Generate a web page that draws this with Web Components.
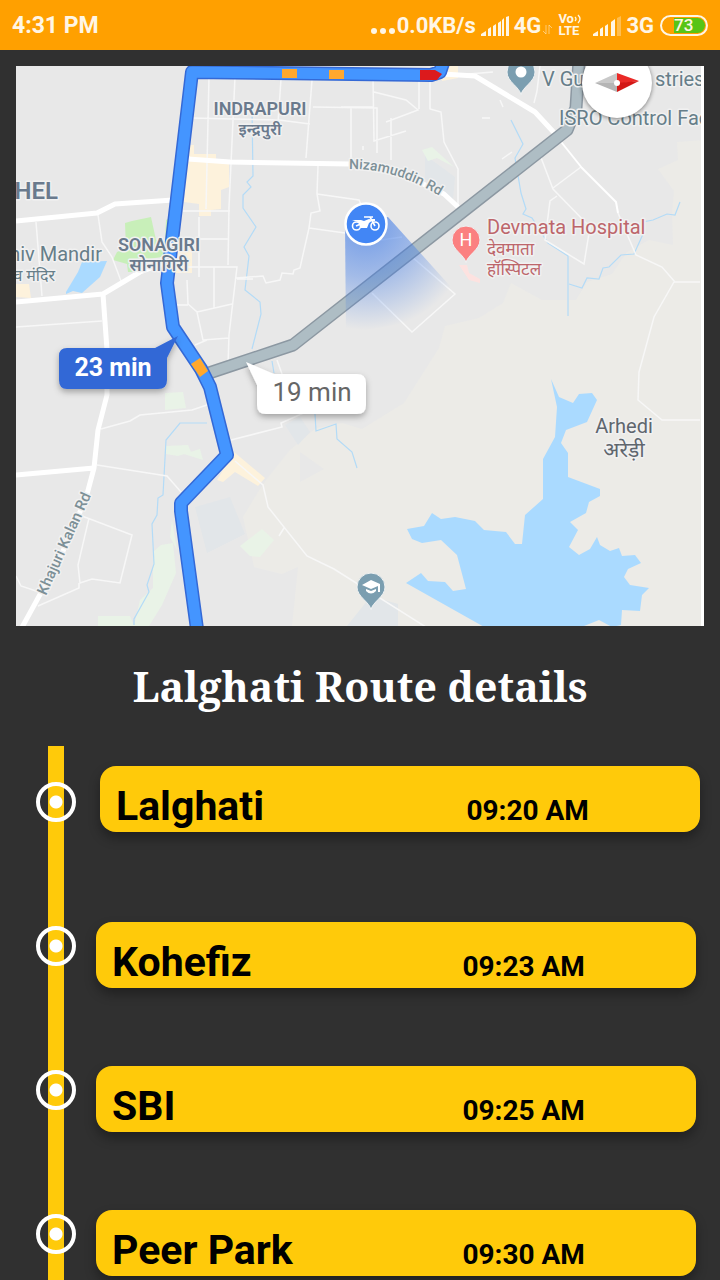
<!DOCTYPE html>
<html lang="en">
<head>
<meta charset="utf-8">
<meta name="viewport" content="width=device-width, initial-scale=1">
<title>Lalghati Route details</title>
<style>
html,body{margin:0;height:100%;background:#303030}
body{font-family:Roboto,"Noto Sans",sans-serif}
</style>
</head>
<body>
<route-app>
  <status-bar slot="status"></status-bar>
  <route-map></route-map>
  <route-heading>Lalghati Route details</route-heading>
  <route-timeline>
    <route-stop current time="09:20 AM">Lalghati</route-stop>
    <route-stop time="09:23 AM">Kohefiz</route-stop>
    <route-stop time="09:25 AM">SBI</route-stop>
    <route-stop time="09:30 AM">Peer Park</route-stop>
  </route-timeline>
</route-app>

<template id="t-app">
<style>
:host{display:flex;flex-direction:column;height:100vh}
main{flex:1;min-height:0;overflow-y:auto;scrollbar-width:none}
</style>
<slot name="status"></slot>
<main><slot></slot></main>
</template>

<template id="t-status">
<style>
:host{display:flex;align-items:center;justify-content:space-between;box-sizing:border-box;height:50px;padding:2px 12px 0;background:#ffa000;color:#fff6e5;font-size:23px;line-height:28px;font-weight:700}
.right{display:flex;align-items:center;font-size:22px}
.dots{width:27px;height:8px;margin-top:10px}
.bars{width:28px;height:20px;margin:0 5px}
.data{width:9px;height:12px;margin:8px 6px 0 2px}
.volte{display:grid;width:24px;font-size:13px;line-height:12px;margin:0 6px 2px 0}
.vo{display:flex;align-items:center}
.vo svg{width:7px;height:10px}
.battery{box-sizing:border-box;width:48px;height:21px;border:2px solid #fff6e5;border-radius:11px;margin:0 0 2px 6px;padding:1px;display:flex}
.battery span{flex:1;border-radius:0 8px 8px 0;margin-left:11px;background:#58c416;font-size:17px;line-height:15px;font-weight:500}
</style>
<span>4:31 PM</span>
<div class="right">
  <svg class="dots" viewBox="0 0 27 8" fill="#fff6e5"><circle cx="4" cy="4" r="3"/><circle cx="13" cy="4" r="3"/><circle cx="22" cy="4" r="3"/></svg>
  <span>0.0KB/s</span>
  <svg class="bars" viewBox="0 0 28 20" fill="#fff6e5"><path d="M0 20v-2l5-3v5zM7 13l3-2v9H7zM12 10l3-2v12h-3zM17 7l3-2v15h-3zM21 4l2-2v18h-2zM25 1l3-1v20h-3z"/></svg>
  <span>4G</span>
  <svg class="data" viewBox="0 0 9 12" stroke="#fff6e5" stroke-opacity=".5" fill="none"><path d="M3 1v9L0 7M6 10V1l3 3"/></svg>
  <span class="volte"><span class="vo">Vo<svg viewBox="0 0 7 10" fill="none" stroke="#fff6e5" stroke-width="1.3"><path d="M1 3q2 2 0 4M4 1q4 4 0 8"/></svg></span><span>LTE</span></span>
  <svg class="bars" viewBox="0 0 28 20" fill="#fff6e5"><path d="M0 20v-2l5-3v5zM7 13l3-2v9H7zM12 10l3-2v12h-3zM18 6l4-3v17h-4z"/><path opacity=".35" d="M24 2l4-2v20h-4z"/></svg>
  <span>3G</span>
  <div class="battery"><span>73</span></div>
</div>
</template>

<template id="t-map">
<style>
:host{display:block;position:relative;margin:16px 16px 0;overflow:hidden}
.map{display:block;width:100%;height:auto;font-family:Roboto,"Noto Sans",sans-serif}
button{position:absolute;top:-18px;right:52px;width:70px;height:70px;padding:0;border:0;border-radius:50%;background:#fff;box-shadow:0 1px 4px #0007}
button svg{display:block;width:70px;height:70px}
.halo text{paint-order:stroke;stroke:#f1f1f1;stroke-width:3px;stroke-linejoin:round}
</style>
<svg class="map" viewBox="16 66 688 560" role="img" aria-label="Route map">
  <defs>
    <radialGradient id="beam" gradientUnits="userSpaceOnUse" cx="366" cy="224" r="106"><stop offset="0" stop-color="#3b78e7" stop-opacity=".7"/><stop offset=".5" stop-color="#3b78e7" stop-opacity=".4"/><stop offset="1" stop-color="#3b78e7" stop-opacity="0"/></radialGradient>
    <filter id="shade" x="-20%" y="-20%" width="140%" height="170%"><feDropShadow dx="0" dy="3" stdDeviation="3" flood-opacity=".3"/></filter>
    <path id="niz" d="M349 169Q400 168 450 203"/>
    <path id="kha" d="M46 596L98 480"/>
    <path id="pin" d="M0 22C-1 14-14 9-14-1A14 14 0 0 1 14-1C14 9 1 14 0 22z"/>
  </defs>
  <path fill="#e8e8e8" d="M16 66h688v560H16z"/>
  <path fill="#ecebe7" d="M704 140l-27 2 1 18-20 9 16 22-2 22 1 32-24-5-22 12-15 22-25 8-11 18-34 0-31-17-8 20-24 15-34 8-6 22-35 55-42 26-20-6-26 5-26 22-24 30-8 12-15 25 11 50 28 7 16-7L292 626H704z"/>
  <g fill="#e2e6e9"><path d="M195 507l35-10 15 37-38 19zM425 155l30 22-2 22-28-20zM347 626l24-30 27 8v22zM285 425l15-8 10 15-12 13z"/><path fill="#e8e8e8" d="M300 452l24 17-24 13z"/></g>
  <g fill="#fdf2dc"><path d="M189 145h5v9h22v9h13v24l-8 3v19l-10 1v6h-12v-12l-15-2zM158 250h34v23h-28zM16 284h13l2 14-15-1zM234 452l31 26-7 8-23-14-12 10-6-2zM443 66h15v12l-16 3z"/></g>
  <g fill="#c8efb9"><path d="M125 223l7-2 19-4 5 23 12 2v14l-26 4v12h-14l-1-8-14-4 4-8 9-4z"/><path d="M166 220l5-3-3 40-4 0z"/></g>
  <g fill="#e9f3e7"><path d="M165 393l18-1 3 16-21 2zM166 446l22-1 3 7-13 4-12-2zM184 454l16-5 3 11zM153 552l8-7 12-2 3 30-14 32-13 21h-15l6-26 13-12zM98 616l32 0 4 10H98zM172 520l5 30-7-13zM240 546l22-17 12 11-14 17-10-1zM422 150l10-3 22 20-17-9-9 3z"/></g>
  <g fill="#aadaff"><path d="M66 292l12-20 4-10 25-1-7 16-18 16-9-2-7 3zM551 379l8 18 14 6 6-9 13-1 5 7-10 22-21 8-5 13 7 10v24l32 12v7l-11 6-3 11-16 9 8 8-9 17 10 8 11-6 7-12 3 8 10 6 9-3 3 8 13-1 6 8-13 6-4 8 6 8 19 3-7 7-2 16-18-1-1 15-9 2-13-7-20 8h-93l-80-45 15-10 7 8 17 1 8 9 13-2-9-34-16-15-19 3-10-4-5-10 17-3 8-13 9 6 14-2 20 4 9 9 22 2 9 12h7l3-29 18-16v-40l12-22 2-30z"/></g>
  <g fill="none" stroke="#b3dbf7" stroke-width="1.2"><path d="M252 110l1 66-6 6 4 5-8 8v13l13 19-12 20 5 9-4 34 15 12 1 12-9 35M272 361l2 12M315 414l1 17 20-7 1 15 15 13 5 16M207 423l-27 0-14 17-3 55-5 3-1 17-5 9 2 40-7 21 2 7-15 27v6M511 120l12 24-8 14 6 35 5 16-3 5 9 4 16 25 20 13v60M569 284l13 4 5-10 12 1 4-11 6-1 12-12 13-1 9-20 0-12 10-2 14-6 8 1 5-13"/></g>
  <g fill="none" stroke="#f7f7f7" stroke-width="1.5">
    <path d="M209 77l-3 132M235 77l-6 130-1 58M281 79l-3 44M312 80l-6 78M191 118l88 2 31 4M313 107l64 1v45M183 211h47M199 217v60M199 239h29M36 222l6 74M98 215l4 27 10 15 9 24M16 327l86-6M187 267l50 0-8 68-1 30M237 279h16M214 267v41M187 280l1 24 9 8 6 28 26-2M177 305h11M197 312l35-8M195 345l12-5M318 166l-1 28 3 17-9 2-2 15-9 40-6 2-1 4-11-1-2 7-14 3-3-7-27 2M317 194l42 6 5 12M309 228l36 5M374 241l28-4M373 77l1 64 32-10M374 92l32 8 12 10-32 12M419 81v28M430 81v28l11 3 3 30 14 27 0 38M351 107l0 57M341 107h33M391 118v42M433 77l60-5M540 66l-3 25-3 12M540 155l13 34 37 38-6 37-39-24 5-39 7-5M553 188l28-21M618 213l18 42 26 12 13 15 25 0M674 282l-20 35-15 55-1 28 24 20 38 0M372 293l40 39 43-38-43-37M101 429l29-8 10-6 52-5 18-6M97 465l70 11 14 16M231 440l51-13-1-4 27-12M235 461l28 24 5 22 39 49 27 13 95 60M79 515l11 4 42 16-12 48-28-4-12 4-2-18 11-47M79 583l0 5-41 18M16 576l5 10 18 6M279 536l5-8M277 360l5 14M500 100l3 7M482 118h8M502 159l10-7M363 146v4"/>
  </g>
  <g fill="none" stroke="#fff" stroke-width="5" stroke-linejoin="round"><path d="M16 221l81-8 18-9 58-4M188 159l42 3 120 2 44 6 50 24 14 13M443 74l32 2 60 36 24 26M16 302l87-8 37-22 25-9M103 294l4 56v45l-9 35-4 38-8 30-26 60-40 73M16 475l78-7"/><path stroke-width="2" d="M558 138l24 30 34 34 2 11"/></g>
  <path fill="#fde2e0" d="M459 265l8 0 2 8 11 6v4l-11-3z"/>
  <g fill="none" stroke-linejoin="round"><path stroke="#8c98a2" stroke-width="13" d="M206 374l87-29 274-215 9-22 3-48"/><path stroke="#aebdc4" stroke-width="10" d="M206 374l87-29 274-215 9-22 3-48"/></g>
  <path fill="url(#beam)" d="M345 224l1 110 106-20-2-28-62-69z"/>
  <g fill="none" stroke-linejoin="round"><path stroke="#3469d6" stroke-width="14" d="M444 60l-4 12-9 3-239-3-25 211 6 44 28 42 9 18 17 68-46 48 0 8 16 118"/><path stroke="#4495ff" stroke-width="11" d="M444 60l-4 12-9 3-239-3-25 211 6 44 28 42 9 18 17 68-46 48 0 8 16 118"/></g>
  <path fill="#ffa82e" d="M282 69h15v9h-15zM329 70h15v9h-15zM191 364l9-6 8 13-8 6z"/><path fill="#dc1a1c" d="M420 70h15l7 4-5 6h-17z"/>
  <g class="halo" fill="#6a7a8d" font-weight="600" text-anchor="middle">
    <text x="260" y="115" font-size="18">INDRAPURI</text><text x="260" y="135" font-size="16">इन्द्रपुरी</text>
    <text x="159" y="251" font-size="18">SONAGIRI</text><text x="159" y="271" font-size="17">सोनागिरी</text>
    <text x="58" y="199" font-size="24" text-anchor="end">HEL</text>
  </g>
  <g class="halo" fill="#667e89" font-size="20">
    <text x="102" y="261" text-anchor="end">hiv Mandir</text><text x="55" y="281" font-size="16" text-anchor="end">व मंदिर</text>
    <text x="542" y="86">V Gu</text><text x="655" y="86">stries</text><text x="559" y="125">ISRO Control Fac</text>
    <g fill="#bd666b"><text x="487" y="234">Devmata Hospital</text><text x="487" y="255" font-size="17">देवमाता</text><text x="487" y="275" font-size="17">हॉस्पिटल</text></g>
    <g fill="#5f666e" text-anchor="middle"><text x="624" y="433">Arhedi</text><text x="624" y="457" font-size="21">अरेड़ी</text></g>
    <g fill="#7d9097" font-size="14" font-weight="500"><text><textPath href="#niz">Nizamuddin Rd</textPath></text><text font-size="15"><textPath href="#kha">Khajuri Kalan Rd</textPath></text></g>
  </g>
  <g stroke="#eef1f2"><use href="#pin" x="521" y="73" fill="#7b9eb0"/><use href="#pin" x="466" y="241" fill="#fb8080"/><use href="#pin" x="371" y="588" fill="#7b9eb0"/></g>
  <circle cx="521" cy="72" r="5.500" fill="#fff"/>
  <text x="466" y="246" font-size="18" fill="#fff" text-anchor="middle">H</text>
  <path fill="#fff" d="M362 585l9-5 9 4v8h-2v-6l-7 3zM366 589l5 2 5-2v2q-5 5-10 0z"/>
  <circle cx="366" cy="224" r="20.500" fill="#4286f5" stroke="#fff" stroke-width="2.500"/>
  <g fill="none" stroke="#fff" stroke-width="1.600"><circle cx="356.500" cy="226" r="4"/><circle cx="375" cy="226" r="4"/><path d="M375 226l-5-9h-6M370 217l3 0M356 226l7-3"/></g>
  <path fill="#fff" d="M352 220h9l3 1 5-2 4 1-4 3-2 5h-6l-3-6zM371 219h4v2h-3z"/>
  <g filter="url(#shade)"><path fill="#3267d6" d="M67 348h88l23-12-11 22v22q0 9-9 9H67q-8 0-8-9v-24q0-8 8-8z"/></g>
  <g filter="url(#shade)"><path fill="#fff" d="M246 362l28 12h83q9 0 9 9v22q0 9-9 9h-91q-9 0-9-9v-20z"/></g>
  <text x="113" y="376" font-size="25" font-weight="700" fill="#fff" text-anchor="middle">23 min</text>
  <text x="312" y="401" font-size="26" fill="#666" text-anchor="middle">19 min</text>
  <path fill="#fff" d="M701 66h3v560h-3z"/>
</svg>
<button type="button" aria-label="Compass"><svg viewBox="0 0 70 70"><path fill="#c9c9c9" d="M13 35l22-10v10z"/><path fill="#b5b5b5" d="M13 35h22v9z"/><path fill="#ea2a27" d="M35 25l22 8-22 3z"/><path fill="#d31715" d="M57 33L35 44v-9z"/><circle cx="35" cy="35" r="3" fill="#fff"/></svg></button>
</template>

<template id="t-heading">
<style>
:host{display:block;padding:32px 16px}
h1{margin:0;color:#fff;font:bold 41px/56px "Noto Serif","Droid Serif","DejaVu Serif",serif;text-align:center}
</style>
<h1><slot></slot></h1>
</template>

<template id="t-timeline">
<style>
:host{display:block;background:linear-gradient(#ffca0a,#ffca0a) 48px 0/16px 100% no-repeat}
</style>
<div role="list"><slot></slot></div>
</template>

<template id="t-stop">
<style>
:host{display:grid;grid-template-columns:40px 1fr;column-gap:20px;align-items:start;box-sizing:border-box;height:144px;padding:32px 24px 0 36px}
:host([current]){padding:20px 20px 0 36px;column-gap:24px}
.node{box-sizing:border-box;width:40px;height:40px;margin-top:4px;border:4px solid #fff;border-radius:50%;background:radial-gradient(circle,#fff 6px,transparent 7px)}
:host([current]) .node{margin-top:16px}
.card{display:grid;grid-template-columns:3fr 2fr;align-items:baseline;padding:16px 0 2px 16px;border-radius:16px;background:#ffca0a;color:#000;font-weight:700;font-size:41px;line-height:48px;box-shadow:0 6px 12px #0005}
time{font-size:28px;line-height:32px}
</style>
<div class="node"></div>
<div class="card"><slot></slot><time></time></div>
</template>

<script>
const define = (name, id, setup) => customElements.define(name, class extends HTMLElement {
  constructor() {
    super();
    this.attachShadow({mode: 'open'}).append(document.getElementById(id).content.cloneNode(true));
  }
  connectedCallback() { if (setup) setup(this); }
});
define('route-app', 't-app');
define('status-bar', 't-status');
define('route-map', 't-map');
define('route-heading', 't-heading');
define('route-timeline', 't-timeline');
define('route-stop', 't-stop', el => {
  el.setAttribute('role', 'listitem');
  el.shadowRoot.querySelector('time').textContent = el.getAttribute('time');
});
</script>
</body>
</html>
